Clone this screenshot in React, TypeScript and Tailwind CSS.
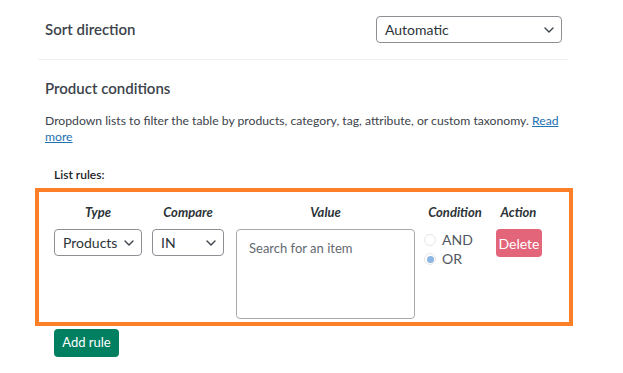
import React from 'react'

const Chevron = () => (
  <svg width="10" height="6" viewBox="0 0 10 6" fill="none" className="shrink-0">
    <path d="M1 1l4 4 4-4" stroke="#3c434a" strokeWidth="1.4" strokeLinecap="round" strokeLinejoin="round" />
  </svg>
)

const FakeSelect = ({ value, className }: { value: string; className: string }) => (
  <div
    className={`flex h-[27px] items-center justify-between rounded-[4px] border border-[#8c8f94] bg-white pl-[8px] pr-[7px] text-[14px] text-[#2c3338] ${className}`}
  >
    <span>{value}</span>
    <Chevron />
  </div>
)

const Radio = ({ label, checked }: { label: string; checked?: boolean }) => (
  <label className="flex items-center gap-[6px] text-[14px] leading-[18px] text-[#50575e]">
    <span className="flex h-[12px] w-[12px] items-center justify-center rounded-full border border-[#e6e6e6] bg-white">
      {checked && <span className="h-[7px] w-[7px] rounded-full bg-[#8cb6e3]" />}
    </span>
    {label}
  </label>
)

const App = () => {
  return (
    <div className="h-[373px] w-[623px] overflow-hidden bg-white font-['Segoe_UI','Lato','Liberation_Sans',sans-serif] text-[#3c434a]">
      <div className="ml-[38px] w-[530px]">
        <div className="flex h-[60px] items-center justify-between border-b border-[#f0f0f1] pl-[7px] pr-[6px]">
          <h2 className="text-[15px] font-semibold">Sort direction</h2>
          <FakeSelect value="Automatic" className="w-[186px]" />
        </div>

        <div className="pl-[7px]">
          <h2 className="mt-[18px] text-[15px] leading-[20px] font-semibold">Product conditions</h2>
          <p className="mt-[15px] w-[520px] text-[12.2px] leading-[16px] text-[#3c434a]">
            Dropdown lists to filter the table by products, category, tag, attribute, or custom taxonomy.{' '}
            <a href="#" className="text-[#2271b1] underline">
              Read more
            </a>
          </p>
          <div className="mt-[22px] pl-[9px] text-[12px] leading-[16px] font-semibold text-[#1d2327]">List rules:</div>
        </div>
      </div>

      <div className="mt-[5px] ml-[35px] w-[538px] border-4 border-[#fd7f28] pr-[15px] pb-[3px] pl-[15px] pt-[11px]">
        <div className="flex gap-[10px] text-[13px] leading-[18px] font-bold italic text-[#2c3338]">
          <div className="w-[88px] text-center">Type</div>
          <div className="w-[72px] text-center">Compare</div>
          <div className="ml-[2px] w-[179px] text-center">Value</div>
          <div className="-ml-[1px] w-[62px] text-center">Condition</div>
          <div className="w-[45px] text-center">Action</div>
        </div>
        <div className="mt-[8px] flex items-start gap-[10px]">
          <FakeSelect value="Products" className="w-[88px]" />
          <FakeSelect value="IN" className="w-[72px]" />
          <div className="ml-[2px] h-[90px] w-[179px] rounded-[4px] border border-[#a7aaad] px-[12px] pt-[9px] text-[13px] text-[#646970]">
            Search for an item
          </div>
          <div className="-ml-[1px] flex w-[62px] flex-col gap-[1px] pt-[2px]">
            <Radio label="AND" />
            <Radio label="OR" checked />
          </div>
          <button className="h-[28px] w-[46px] rounded-[4px] bg-[#e3657a] text-[14px] text-white">Delete</button>
        </div>
      </div>

      <button className="mt-[3px] ml-[54px] h-[28px] w-[65px] rounded-[4px] bg-[#008060] text-[13px] text-white">
        Add rule
      </button>
    </div>
  )
}

export default App
